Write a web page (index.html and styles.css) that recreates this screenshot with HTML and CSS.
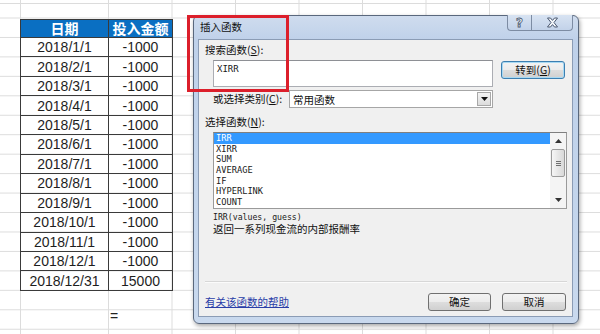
FILE: index.html
```html
<!DOCTYPE html>
<html lang="zh-CN">
<head>
  <meta charset="UTF-8" />
  <meta name="viewport" content="width=device-width, initial-scale=1.0" />
  <title>插入函数 - XIRR</title>
  <link rel="stylesheet" href="styles.css">
</head>
<body>
  <div class="sheet">
    <table class="cash">
      <tr><th>日期</th><th>投入金额</th></tr>
      <tr><td>2018/1/1</td><td>-1000</td></tr>
      <tr><td>2018/2/1</td><td>-1000</td></tr>
      <tr><td>2018/3/1</td><td>-1000</td></tr>
      <tr><td>2018/4/1</td><td>-1000</td></tr>
      <tr><td>2018/5/1</td><td>-1000</td></tr>
      <tr><td>2018/6/1</td><td>-1000</td></tr>
      <tr><td>2018/7/1</td><td>-1000</td></tr>
      <tr><td>2018/8/1</td><td>-1000</td></tr>
      <tr><td>2018/9/1</td><td>-1000</td></tr>
      <tr><td>2018/10/1</td><td>-1000</td></tr>
      <tr><td>2018/11/1</td><td>-1000</td></tr>
      <tr><td>2018/12/1</td><td>-1000</td></tr>
      <tr><td>2018/12/31</td><td>15000</td></tr>
    </table>
    <div class="formula">=</div>
  </div>

  <div class="dialog">
    <div class="titlebar">
      <span class="title">插入函数</span>
      <div class="caption">
        <span class="cap cap-help">?</span>
        <span class="cap cap-close">
          <svg width="13" height="11" viewBox="0 0 13 11">
            <path d="M1.5 1 H4.5 L6.5 3.4 L8.5 1 H11.5 L8 5.5 L11.5 10 H8.5 L6.5 7.6 L4.5 10 H1.5 L5 5.5 Z" fill="#f4f7fb" stroke="#4a5870" stroke-width="1" stroke-linejoin="round"/>
          </svg>
        </span>
      </div>
    </div>

    <div class="panel">
      <div class="label label-search">搜索函数(<u>S</u>):</div>
      <div class="search-row">
        <div class="search-input">XIRR</div>
        <button class="btn btn-go">转到(<u>G</u>)</button>
      </div>

      <div class="category-row">
        <span class="category-label">或选择类别(<u>C</u>):</span>
        <div class="select">
          <span>常用函数</span>
          <span class="select-arrow">
            <svg width="7" height="4" viewBox="0 0 7 4"><path d="M0 0 H7 L3.5 4 Z" fill="#111"/></svg>
          </span>
        </div>
      </div>

      <div class="label label-list">选择函数(<u>N</u>):</div>
      <div class="listbox">
        <div class="items">
          <div class="item selected">IRR</div>
          <div class="item">XIRR</div>
          <div class="item">SUM</div>
          <div class="item">AVERAGE</div>
          <div class="item">IF</div>
          <div class="item">HYPERLINK</div>
          <div class="item">COUNT</div>
        </div>
        <div class="scrollbar">
          <div class="sb-arrow">
            <svg width="7" height="4" viewBox="0 0 7 4"><path d="M3.5 0 L7 4 H0 Z" fill="#333"/></svg>
          </div>
          <div class="sb-thumb"><span></span><span></span><span></span></div>
          <div class="sb-space"></div>
          <div class="sb-arrow">
            <svg width="7" height="4" viewBox="0 0 7 4"><path d="M0 0 H7 L3.5 4 Z" fill="#333"/></svg>
          </div>
        </div>
      </div>

      <div class="sig">IRR(values, guess)</div>
      <div class="desc">返回一系列现金流的内部报酬率</div>

      <div class="sep"></div>
      <div class="footer">
        <a class="help" href="#">有关该函数的帮助</a>
        <button class="btn btn-ok">确定</button>
        <button class="btn btn-cancel">取消</button>
      </div>
    </div>
  </div>

  <div class="callout"></div>
</body>
</html>
```

FILE: styles.css
```css
body {
  margin: 0;
  width: 600px;
  height: 334px;
  overflow: hidden;
  background-color: #fff;
  background-image:
    linear-gradient(#dcdcdc, #dcdcdc),
    linear-gradient(to bottom, #dcdcdc 1px, transparent 1px),
    linear-gradient(#dcdcdc, #dcdcdc),
    linear-gradient(#fff, #fff),
    linear-gradient(to right, #dcdcdc 1px, transparent 1px);
  background-size: 100% 1px, 100% 19.46px, 1px 100%, 86px 100%, 63.5px 100%;
  background-position: 0 3px, 0 17.5px, 20px 0, 21px 0, 108px 0;
  background-repeat: no-repeat, repeat, no-repeat, no-repeat, repeat;
  font-family: "Liberation Sans", "Noto Sans CJK SC", sans-serif;
}

.sheet { padding: 19px 0 0 20px; }

.cash { border-collapse: collapse; font-size: 14px; color: #1e1e1e; }
.cash th, .cash td { border: 1px solid #3a3a3a; padding: 0; text-align: center; }
.cash th {
  height: 17px;
  background: #0a6fc2;
  color: #fff;
  font-family: "Noto Sans CJK SC", sans-serif;
  font-weight: bold;
  font-size: 14px;
  line-height: 17px;
}
.cash td { height: 18.46px; line-height: 18px; }
.cash td:first-child { width: 87px; }
.cash td:last-child { width: 63px; }

.formula { margin: 18px 0 0 90px; font-size: 14px; line-height: 14px; color: #222; }

/* dialog window */
.dialog {
  position: absolute;
  left: 193px;
  top: 15px;
  width: 384px;
  height: 307px;
  border: 1px solid #5a687d;
  border-radius: 6px;
  background: linear-gradient(#cfdcee, #bfd1ea 24px, #c3d5ec 60%, #c9d9ee);
  box-shadow: 1px 2px 4px rgba(0, 0, 0, 0.35);
  display: flex;
  flex-direction: column;
  font-family: "Noto Sans CJK SC", sans-serif;
  font-size: 10.5px;
  color: #111;
}

.titlebar { height: 23px; display: flex; justify-content: space-between; align-items: flex-start; }
.title { padding-left: 6px; line-height: 21px; }

.caption { display: flex; margin: -1px 5px 0 0; height: 16px; }
.cap {
  display: flex;
  align-items: center;
  justify-content: center;
  height: 15px;
  border: 1px solid #7d8ca3;
  border-top: none;
  background: linear-gradient(#d8e3f2, #c2d2e9);
}
.cap-help {
  width: 23px;
  border-radius: 0 0 0 4px;
  border-right: none;
  font-family: "DejaVu Sans", sans-serif;
  font-weight: bold;
  font-size: 12px;
  color: #f4f7fb;
  -webkit-text-stroke: 0.8px #4a5870;
}
.cap-close { width: 40px; border-radius: 0 0 4px 0; }

.panel {
  flex: 1;
  margin: 0 5px 6px 4px;
  border: 1px solid #8b9cb5;
  background: #f0f0f0;
  display: flex;
  flex-direction: column;
}

.label { line-height: 14px; margin-left: 6px; }
.label u, .category-label u, .btn u { text-decoration: underline; }
.label-search { margin-top: 3px; }

.search-row { display: flex; align-items: flex-start; gap: 8px; margin: 3px 0 0 14px; }
.search-input {
  box-sizing: border-box;
  width: 280px;
  height: 27px;
  padding: 3px 3px;
  border: 1px solid #abadb3;
  border-top-color: #8e9095;
  background: #fff;
  font-family: "DejaVu Sans Mono", monospace;
  font-size: 9px;
  line-height: 11px;
  color: #1a1a1a;
}

.btn {
  box-sizing: border-box;
  height: 18px;
  padding: 0;
  border: 1px solid #707070;
  border-radius: 3px;
  background: linear-gradient(#f3f3f3, #ececec 48%, #dddddd 52%, #d0d0d0);
  font-family: "Noto Sans CJK SC", sans-serif;
  font-size: 10.5px;
  line-height: 16px;
  color: #111;
}
.btn-go {
  width: 64px;
  margin-top: 1px;
  border-color: #3c7fb1;
  box-shadow: inset 0 0 0 1px #a8d9f3;
}

.category-row { display: flex; align-items: center; margin: 3px 0 0 14px; }
.category-label { width: 76px; line-height: 18px; }
.select {
  box-sizing: border-box;
  width: 204px;
  height: 18px;
  border: 1px solid #a6a6a6;
  background: #fff;
  display: flex;
  justify-content: space-between;
  align-items: center;
  padding-left: 3px;
}
.select-arrow {
  width: 14px;
  height: 14px;
  margin-right: 1px;
  border: 1px solid #a8a8a8;
  box-sizing: border-box;
  background: linear-gradient(#f4f4f4, #dcdcdc);
  display: flex;
  align-items: center;
  justify-content: center;
}

.label-list { margin-top: 7px; }

.listbox {
  height: 75px;
  margin: 3px 5px 0 14px;
  border: 1px solid #9a9a9a;
  border-top-color: #7f7f7f;
  background: #fff;
  display: flex;
}
.items {
  flex: 1;
  font-family: "DejaVu Sans Mono", monospace;
  font-size: 8.7px;
  line-height: 10.67px;
  color: #1a1a1a;
}
.item { padding-left: 2px; height: 10.67px; }
.item.selected { background: #3399ff; color: #fff; }

.scrollbar { width: 16px; background: #f4f4f4; display: flex; flex-direction: column; }
.sb-arrow { height: 16px; display: flex; align-items: center; justify-content: center; }
.sb-thumb {
  height: 28px;
  margin: 0 1px;
  box-sizing: border-box;
  border: 1px solid #9b9b9b;
  border-radius: 2px;
  background: linear-gradient(to right, #f6f6f6, #e6e6e6 50%, #d9d9d9);
  display: flex;
  flex-direction: column;
  justify-content: center;
  align-items: center;
  gap: 1px;
}
.sb-thumb span { width: 5px; height: 1px; background: #6f6f6f; }
.sb-space { flex: 1; }

.sig {
  margin: 3px 0 0 14px;
  font-family: "DejaVu Sans Mono", monospace;
  font-size: 8.2px;
  line-height: 11px;
  color: #1a1a1a;
}
.desc { margin-left: 14px; line-height: 12px; }

.sep {
  margin: auto 5px 0 6px;
  height: 1px;
  background: #d7d7d7;
  border-bottom: 1px solid #fbfbfb;
}

.footer { display: flex; align-items: center; margin: 10px 6px 5px 6px; }
.help { flex: 1; color: #2a3ea8; text-decoration: underline; line-height: 14px; }
.btn-ok { width: 63px; }
.btn-cancel { width: 64px; margin-left: 11px; }

/* red highlight drawn over the screenshot */
.callout {
  position: absolute;
  left: 187px;
  top: 15px;
  width: 102px;
  height: 77px;
  box-sizing: border-box;
  border: 3px solid #dc1f2b;
}
```
